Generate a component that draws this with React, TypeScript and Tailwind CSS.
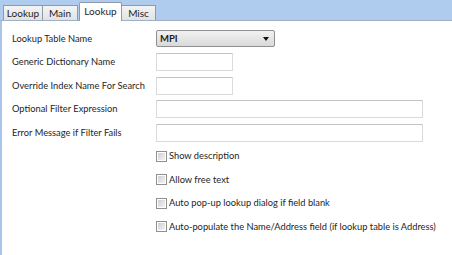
import React from "react"

const uiFont = { fontFamily: 'Lato, "Open Sans", sans-serif' }

function Tab({ label, width, active }: { label: string; width: string; active?: boolean }) {
  if (active) {
    return (
      <div className={`relative z-10 -mb-px ml-[1px] flex h-[19px] ${width} items-center justify-center rounded-t-[2px] border border-b-0 border-[#8e9aa8] bg-white pb-[2px] text-[10px] text-[#1e1e1e]`}>
        {label}
      </div>
    )
  }
  return (
    <div className={`-ml-px flex h-[15px] ${width} items-center justify-center border border-b-0 border-[#8e9aa8] bg-gradient-to-b from-[#f4f4f4] to-[#e2e2e2] text-[10px] text-[#1e1e1e] first:ml-0`}>
      {label}
    </div>
  )
}

function TextBox({ wide }: { wide?: boolean }) {
  return (
    <div
      className={`h-[18px] ${wide ? "w-[267px]" : "w-[77px]"} rounded-[1px] border border-[#dadada] border-t-[#c3c3c3] bg-white`}
    />
  )
}

function Row({ label, children }: { label?: string; children: React.ReactNode }) {
  return (
    <div className="flex h-[23.5px] items-center">
      <div className="w-[154px] shrink-0 whitespace-nowrap pl-[10px] text-[9.3px] text-[#1e1e1e]">{label}</div>
      {children}
    </div>
  )
}

function Check({ label }: { label: string }) {
  return (
    <Row>
      <div className="flex items-center gap-[2px] whitespace-nowrap">
        <div className="flex h-[11px] w-[11px] shrink-0 items-center justify-center border border-[#8e8f8f] bg-white">
          <div className="h-[7px] w-[7px] bg-gradient-to-br from-[#cfcfcf] to-[#f4f4f4]" />
        </div>
        <span className="text-[9.3px] text-[#1e1e1e]">{label}</span>
      </div>
    </Row>
  )
}

export default function App() {
  return (
    <div className="h-[255px] w-[452px] overflow-hidden bg-white" style={uiFont}>
      <div className="flex h-[21px] items-end border-b border-[#9fb0c5] bg-[#afcbee] pl-[3px]">
        <Tab label="Lookup" width="w-[40px]" />
        <Tab label="Main" width="w-[36px]" />
        <Tab label="Lookup" width="w-[43px]" active />
        <Tab label="Misc" width="w-[35px]" />
      </div>
      <div className="h-[234px] border-l-2 border-[#a9c4e8] pt-[6px]">
        <Row label="Lookup Table Name">
          <div className="flex h-[17px] w-[119px] items-center justify-between rounded-[2px] border border-[#8e8f8f] bg-gradient-to-b from-[#f2f2f2] to-[#d9d9d9] pl-[3px] pr-[5px]">
            <span className="text-[9.5px] font-bold text-[#1e1e1e]">MPI</span>
            <svg width="6" height="4" viewBox="0 0 6 4">
              <path d="M0 0h6L3 4z" fill="#111" />
            </svg>
          </div>
        </Row>
        <Row label="Generic Dictionary Name">
          <TextBox />
        </Row>
        <Row label="Override Index Name For Search">
          <TextBox />
        </Row>
        <Row label="Optional Filter Expression">
          <TextBox wide />
        </Row>
        <Row label="Error Message if Filter Fails">
          <TextBox wide />
        </Row>
        <Check label="Show description" />
        <Check label="Allow free text" />
        <Check label="Auto pop-up lookup dialog if field blank" />
        <Check label="Auto-populate the Name/Address field (if lookup table is Address)" />
      </div>
    </div>
  )
}
